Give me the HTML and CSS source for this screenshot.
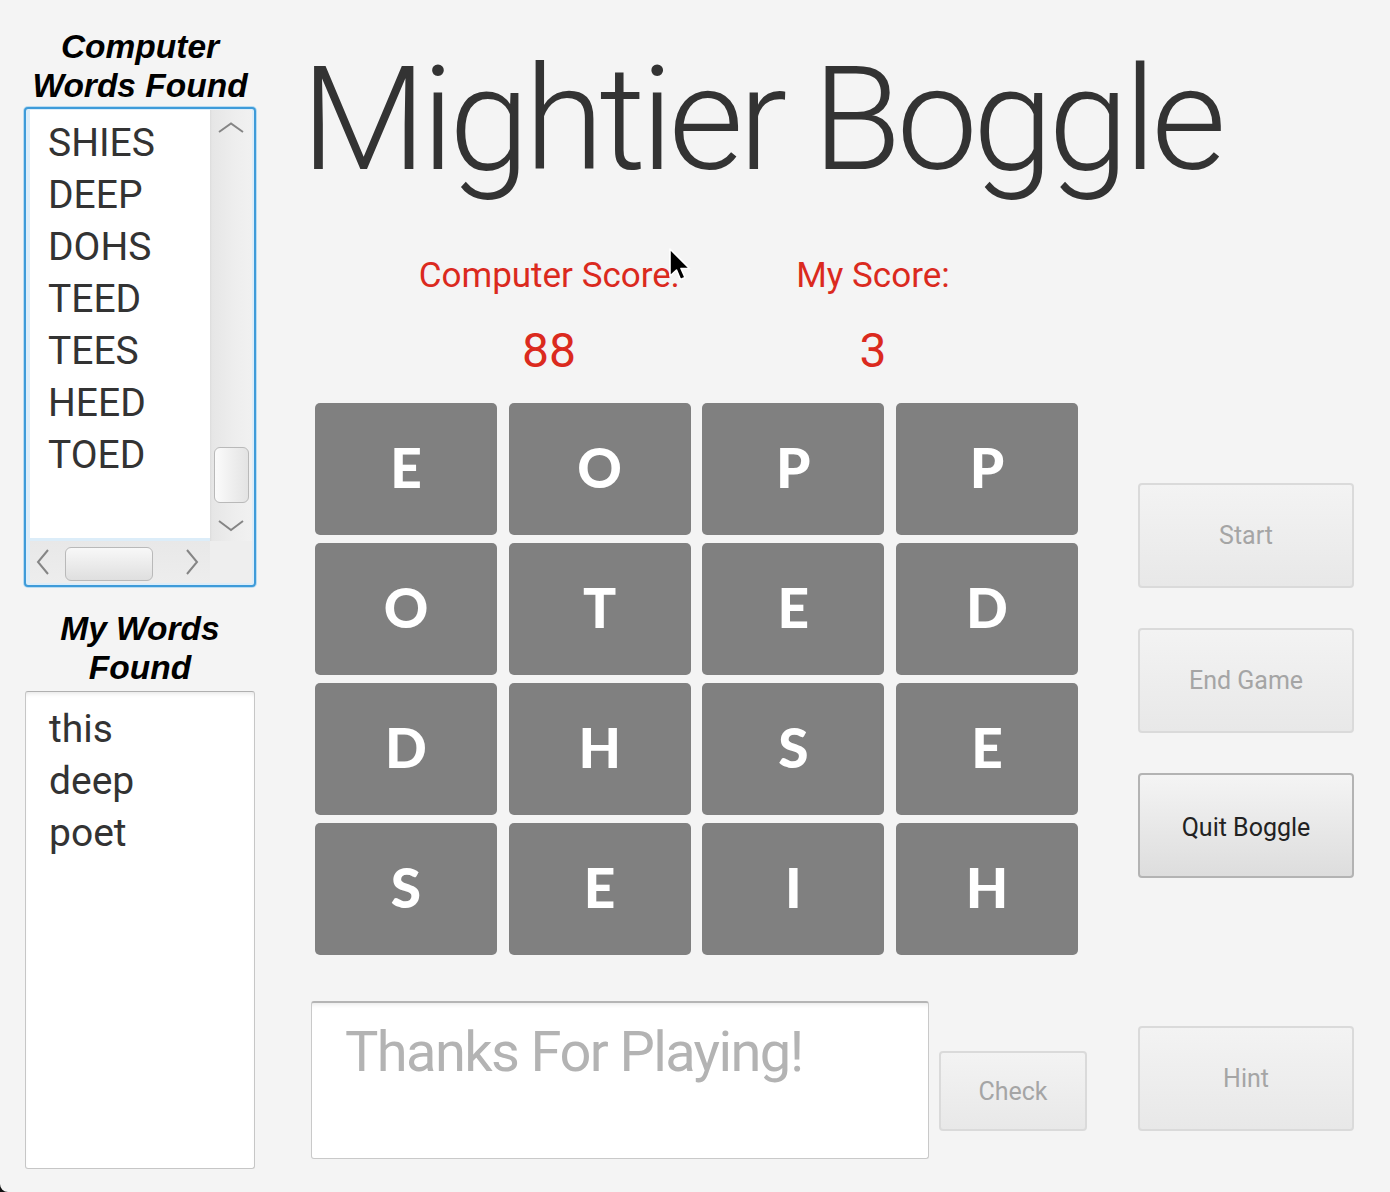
FILE: index.html
```html
<!DOCTYPE html>
<html>
<head>
<meta charset="utf-8">
<title>Mightier Boggle</title>
<link rel="stylesheet" href="styles.css">
</head>
<body>
<div class="app">
  <aside class="side">
    <h2 class="side-title">Computer<br>Words Found</h2>
    <div class="listbox focused">
      <div class="lb-grid">
        <ul class="words">
          <li>SHIES</li>
          <li>DEEP</li>
          <li>DOHS</li>
          <li>TEED</li>
          <li>TEES</li>
          <li>HEED</li>
          <li>TOED</li>
        </ul>
        <div class="vscroll">
          <svg class="chev-up" width="26" height="11" viewBox="0 0 26 11"><polyline points="1,10 13,1.5 25,10" fill="none" stroke="#858585" stroke-width="2"/></svg>
          <div class="vtrack"><div class="vthumb"></div></div>
          <svg class="chev-down" width="26" height="14" viewBox="0 0 26 14"><polyline points="1,3 13,12 25,3" fill="none" stroke="#858585" stroke-width="2"/></svg>
        </div>
        <div class="hscroll">
          <svg class="chev-left" width="14" height="26" viewBox="0 0 14 26"><polyline points="12,1 2,13 12,25" fill="none" stroke="#858585" stroke-width="2"/></svg>
          <div class="hthumb"></div>
          <svg class="chev-right" width="14" height="26" viewBox="0 0 14 26"><polyline points="2,1 12,13 2,25" fill="none" stroke="#858585" stroke-width="2"/></svg>
        </div>
        <div class="corner"></div>
      </div>
    </div>
    <h2 class="side-title second">My Words<br>Found</h2>
    <div class="listbox plain">
      <ul class="words mine">
        <li>this</li>
        <li>deep</li>
        <li>poet</li>
      </ul>
    </div>
  </aside>

  <main class="main">
    <h1 class="title">Mightier Boggle</h1>

    <div class="scores">
      <div class="score">
        <div class="score-label">Computer Score:</div>
        <div class="score-value">88</div>
      </div>
      <div class="score">
        <div class="score-label">My Score:</div>
        <div class="score-value">3</div>
      </div>
    </div>

    <div class="middle">
      <div class="board">
        <div class="tile">E</div>
        <div class="tile">O</div>
        <div class="tile">P</div>
        <div class="tile">P</div>
        <div class="tile">O</div>
        <div class="tile">T</div>
        <div class="tile">E</div>
        <div class="tile">D</div>
        <div class="tile">D</div>
        <div class="tile">H</div>
        <div class="tile">S</div>
        <div class="tile">E</div>
        <div class="tile">S</div>
        <div class="tile">E</div>
        <div class="tile">I</div>
        <div class="tile">H</div>
      </div>
      <div class="actions">
        <button class="btn big" disabled>Start</button>
        <button class="btn big" disabled>End Game</button>
        <button class="btn big active">Quit Boggle</button>
      </div>
    </div>

    <div class="bottom">
      <div class="entry">Thanks For Playing!</div>
      <button class="btn check" disabled>Check</button>
      <button class="btn big hint" disabled>Hint</button>
    </div>
  </main>
</div>

<svg class="cursor" width="24" height="36" viewBox="0 0 24 36">
  <path d="M2,2 L2,29 L8.5,23 L12.5,32.5 L17,30.5 L13,21.5 L21.5,21.5 Z" fill="#000" stroke="#fff" stroke-width="1.6" stroke-linejoin="round"/>
</svg>
<svg class="win-corner" width="8" height="8" viewBox="0 0 8 8"><path d="M0,0 A8,8 0 0 0 8,8 L0,8 Z" fill="#111"/></svg>
</body>
</html>
```

FILE: styles.css
```css
html, body {
  margin: 0;
  padding: 0;
  background: #f4f4f4;
}

body {
  width: 1390px;
  height: 1192px;
  overflow: hidden;
  font-family: Roboto, "Liberation Sans", sans-serif;
  color: #333333;
}

.app {
  display: flex;
  align-items: flex-start;
}

/* ---------- left column ---------- */
.side {
  width: 232px;
  padding: 27px 0 0 24px;
}

.side-title {
  margin: 0;
  font-family: "Liberation Sans", Arial, sans-serif;
  font-weight: bold;
  font-style: italic;
  font-size: 33.5px;
  line-height: 39px;
  text-align: center;
  color: #000;
}

.side-title.second {
  margin-top: 22px;
}

.listbox {
  box-sizing: border-box;
  background: #fff;
}

.listbox.focused {
  margin-top: 2px;
  width: 232px;
  height: 480px;
  border: 2px solid #3e9bd9;
  border-radius: 4px;
  box-shadow: 0 0 0 1px #b9dcf2;
  background: #dcedf9;
  padding: 1px 2px 2px 4px;
}

.lb-grid {
  display: grid;
  grid-template-columns: 180px 42px;
  grid-template-rows: 431px 42px;
}

.words {
  list-style: none;
  margin: 0;
  padding: 7px 0 0 18px;
  font-size: 39px;
  line-height: 52px;
  color: #333;
}

.lb-grid .words {
  background: #fff;
  border-bottom: 3px solid #dcedf9;
  box-sizing: border-box;
  overflow: hidden;
}

.vscroll {
  display: flex;
  flex-direction: column;
  align-items: center;
  padding: 12px 0 9px;
  box-sizing: border-box;
  background: linear-gradient(to right, #dcdcdc 0, #e6e6e6 2px, #eeeeee 60%, #f1f1f1 100%);
}

.chev-up, .chev-down {
  display: block;
  flex: none;
}

.vtrack {
  flex: 1;
  display: flex;
  flex-direction: column;
  justify-content: flex-end;
  padding-bottom: 15px;
}

.vthumb {
  width: 35px;
  height: 56px;
  box-sizing: border-box;
  border: 1px solid #b9b9b9;
  border-radius: 6px;
  background: linear-gradient(to right, #fbfbfb, #e3e3e3);
}

.hscroll {
  display: flex;
  align-items: center;
  padding: 0 11px 0 6px;
  background: linear-gradient(to bottom, #e8e8e8, #ededed);
}

.chev-left, .chev-right {
  display: block;
  flex: none;
}

.hthumb {
  margin-left: 15px;
  margin-top: 4px;
  width: 88px;
  height: 34px;
  box-sizing: border-box;
  border: 1px solid #b9b9b9;
  border-radius: 6px;
  background: linear-gradient(to bottom, #f8f8f8, #dfdfdf);
}

.chev-right {
  margin-left: auto;
}

.corner {
  background: #eeeeee;
}

.listbox.plain {
  margin: 4px 0 0 1px;
  width: 230px;
  height: 478px;
  border: 1px solid #c6c6c6;
  border-top-color: #b0b0b0;
  border-radius: 3px;
  box-shadow: inset 0 4px 5px -3px rgba(0, 0, 0, 0.12);
}

.words.mine {
  padding: 11px 0 0 23px;
}

/* ---------- main ---------- */
.main {
  margin-left: 55px;
  width: 1043px;
  padding-top: 47px;
}

.title {
  margin: 0 0 0 -10px;
  height: 145px;
  font-weight: 300;
  font-size: 145px;
  line-height: 145px;
  letter-spacing: -5px;
  white-space: nowrap;
  color: #333;
}

.scores {
  margin-top: 64px;
  display: flex;
  gap: 24px;
  padding-left: 88px;
}

.score {
  width: 300px;
  text-align: center;
  color: #db2a1e;
}

.score-label {
  font-size: 35px;
  line-height: 40px;
}

.score-value {
  margin-top: 26px;
  font-size: 48px;
  line-height: 57px;
}

.middle {
  margin-top: 24px;
  display: flex;
  justify-content: space-between;
  align-items: flex-start;
}

.board {
  margin-left: 4px;
  display: grid;
  grid-template-columns: repeat(4, 182px);
  grid-auto-rows: 132px;
  column-gap: 11.67px;
  row-gap: 8px;
}

.tile {
  box-sizing: border-box;
  padding-bottom: 5px;
  background: #808080;
  border-radius: 5px;
  color: #fff;
  font-family: Lato, "Open Sans", sans-serif;
  font-weight: 900;
  font-size: 55px;
  display: flex;
  align-items: center;
  justify-content: center;
}

.actions {
  width: 216px;
  padding-top: 80px;
  display: flex;
  flex-direction: column;
  gap: 40px;
}

.btn {
  box-sizing: border-box;
  display: flex;
  align-items: center;
  justify-content: center;
  padding: 0;
  margin: 0;
  font-family: Roboto, "Liberation Sans", sans-serif;
  font-size: 25px;
  border-radius: 4px;
  border: 2px solid #dadada;
  background: linear-gradient(to bottom, #f3f3f3, #e8e8e8);
  color: #a5a5a5;
}

.btn.big {
  width: 216px;
  height: 105px;
}

.btn.active {
  border-color: #b3b3b3;
  background: linear-gradient(to bottom, #f4f4f4, #dddddd);
  color: #222;
  padding-top: 3px;
}

.bottom {
  margin-top: 46px;
  display: flex;
  align-items: flex-start;
}

.entry {
  box-sizing: border-box;
  width: 618px;
  height: 158px;
  padding: 17px 0 0 33px;
  background: #fff;
  border: 1px solid #c9c9c9;
  border-top: 2px solid #b5b5b5;
  border-radius: 3px;
  box-shadow: inset 0 5px 5px -4px rgba(0, 0, 0, 0.10);
  font-size: 56px;
  line-height: 64px;
  letter-spacing: -1.6px;
  color: #b3b3b3;
  white-space: nowrap;
}

.btn.check {
  margin: 50px 0 0 10px;
  width: 148px;
  height: 80px;
}

.btn.hint {
  margin: 25px 0 0 auto;
}

/* ---------- overlays ---------- */
.cursor {
  position: absolute;
  left: 668px;
  top: 247px;
}

.win-corner {
  position: absolute;
  left: 0;
  top: 1184px;
}
```
